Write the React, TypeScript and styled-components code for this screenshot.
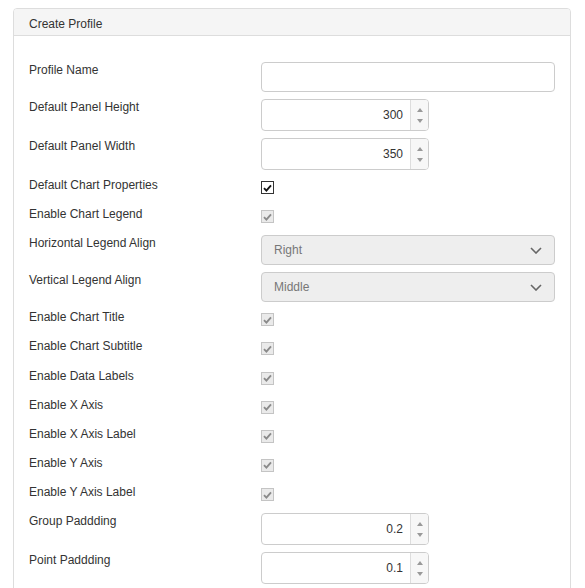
import React from 'react'
import styled, { createGlobalStyle } from 'styled-components'

const GlobalStyle = createGlobalStyle`
  html, body {
    margin: 0;
    background: #fff;
  }
  body {
    padding: 8px 14px 0 13px;
    font-family: "Liberation Sans", Arial, sans-serif;
    font-size: 12px;
    color: #333;
  }
`

const Panel = styled.div`
  border: 1px solid #ddd;
  border-radius: 4px 4px 0 0;
  background: #fff;
`

const PanelHeading = styled.div`
  background: #f5f5f5;
  border-bottom: 1px solid #ddd;
  padding: 8px 15px 4px;
  line-height: 14px;
  border-radius: 3px 3px 0 0;
`

const PanelBody = styled.div`
  padding: 26px 15px 15px;
`

const Row = styled.div<{ $h: number }>`
  display: grid;
  grid-template-columns: 232px 1fr;
  align-items: start;
  margin-bottom: 7px;
  min-height: ${({ $h }) => $h}px;
`

const Label = styled.label`
  padding-top: 1px;
  line-height: 14px;
  color: #333;
`

const TextInput = styled.input`
  box-sizing: border-box;
  width: 100%;
  height: 30px;
  border: 1px solid #ccc;
  border-radius: 4px;
  background: #fff;
  outline: none;
  padding: 0 12px;
  font: inherit;
`

const Spinner = styled.div`
  display: flex;
  width: 168px;
  height: 32px;
  box-sizing: border-box;
  border: 1px solid #ccc;
  border-radius: 4px;
  overflow: hidden;
  background: #fff;
`

const SpinnerValue = styled.div`
  flex: 1;
  display: flex;
  align-items: center;
  justify-content: flex-end;
  padding-right: 7px;
  color: #333;
`

const SpinnerButtons = styled.div`
  width: 17px;
  border-left: 1px solid #ddd;
  background: #f7f7f7;
  display: flex;
  flex-direction: column;
  align-items: center;
  justify-content: center;
  gap: 7px;
`

const Arrow = styled.span<{ $up?: boolean }>`
  width: 0;
  height: 0;
  border-left: 3.5px solid transparent;
  border-right: 3.5px solid transparent;
  ${({ $up }) => ($up ? 'border-bottom: 4px solid #999;' : 'border-top: 4px solid #999;')}
`

const Select = styled.div`
  box-sizing: border-box;
  height: 30px;
  border: 1px solid #ccc;
  border-radius: 4px;
  background: #eee;
  display: flex;
  align-items: center;
  justify-content: space-between;
  padding: 0 12px 0 12px;
  color: #777;
`

const Check = styled.span<{ $disabled?: boolean }>`
  box-sizing: border-box;
  display: flex;
  align-items: center;
  justify-content: center;
  width: 13px;
  height: 13px;
  margin-top: 4px;
  border: 1px solid ${({ $disabled }) => ($disabled ? '#c4c4c4' : '#333')};
  background: ${({ $disabled }) => ($disabled ? '#eaeaea' : '#fff')};
`

const CheckMark = ({ color }: { color: string }) => (
  <svg width="9" height="8" viewBox="0 0 9 8">
    <path d="M1 4.2 L3.4 6.6 L8 1.4" fill="none" stroke={color} strokeWidth="1.9" />
  </svg>
)

const Chevron = () => (
  <svg width="12" height="7" viewBox="0 0 12 7">
    <path d="M1 1 L6 6 L11 1" fill="none" stroke="#666" strokeWidth="1.6" />
  </svg>
)

type Field =
  | { label: string; kind: 'text' }
  | { label: string; kind: 'number'; value: string }
  | { label: string; kind: 'check'; disabled?: boolean }
  | { label: string; kind: 'select'; value: string }

const fields: Field[] = [
  { label: 'Profile Name', kind: 'text' },
  { label: 'Default Panel Height', kind: 'number', value: '300' },
  { label: 'Default Panel Width', kind: 'number', value: '350' },
  { label: 'Default Chart Properties', kind: 'check' },
  { label: 'Enable Chart Legend', kind: 'check', disabled: true },
  { label: 'Horizontal Legend Align', kind: 'select', value: 'Right' },
  { label: 'Vertical Legend Align', kind: 'select', value: 'Middle' },
  { label: 'Enable Chart Title', kind: 'check', disabled: true },
  { label: 'Enable Chart Subtitle', kind: 'check', disabled: true },
  { label: 'Enable Data Labels', kind: 'check', disabled: true },
  { label: 'Enable X Axis', kind: 'check', disabled: true },
  { label: 'Enable X Axis Label', kind: 'check', disabled: true },
  { label: 'Enable Y Axis', kind: 'check', disabled: true },
  { label: 'Enable Y Axis Label', kind: 'check', disabled: true },
  { label: 'Group Paddding', kind: 'number', value: '0.2' },
  { label: 'Point Paddding', kind: 'number', value: '0.1' },
]

const heights = { text: 30, number: 32, check: 22.15, select: 30 }

const renderControl = (f: Field) => {
  switch (f.kind) {
    case 'text':
      return <TextInput type="text" />
    case 'number':
      return (
        <Spinner>
          <SpinnerValue>{f.value}</SpinnerValue>
          <SpinnerButtons>
            <Arrow $up />
            <Arrow />
          </SpinnerButtons>
        </Spinner>
      )
    case 'check':
      return (
        <Check $disabled={f.disabled}>
          <CheckMark color={f.disabled ? '#8a8a8a' : '#111'} />
        </Check>
      )
    case 'select':
      return (
        <Select>
          <span>{f.value}</span>
          <Chevron />
        </Select>
      )
  }
}

const App = () => {
  return (
    <>
      <GlobalStyle />
      <Panel>
        <PanelHeading>Create Profile</PanelHeading>
        <PanelBody>
          {fields.map((f) => (
            <Row key={f.label} $h={heights[f.kind]}>
              <Label>{f.label}</Label>
              <div>{renderControl(f)}</div>
            </Row>
          ))}
        </PanelBody>
      </Panel>
    </>
  )
}

export default App
